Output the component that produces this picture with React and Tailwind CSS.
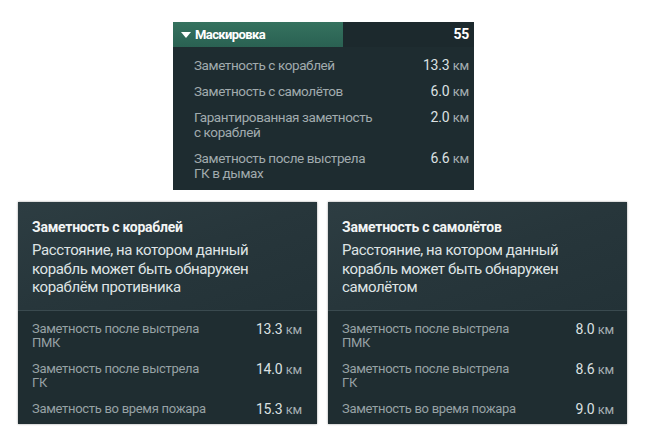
const font = { fontFamily: '"Roboto", "Liberation Sans", sans-serif' };

const topRows = [
  { label: ['Заметность с кораблей'], value: '13.3' },
  { label: ['Заметность с самолётов'], value: '6.0' },
  { label: ['Гарантированная заметность', 'с кораблей'], value: '2.0' },
  { label: ['Заметность после выстрела', 'ГК в дымах'], value: '6.6' },
];

const Value = ({ v }) => (
  <span className="whitespace-nowrap leading-[15px] text-[#dce1e2] text-[14px] tracking-[-0.2px]">
    {v} <span className="text-[13px] text-[#a4aeb1]">км</span>
  </span>
);

const InfoCard = ({ title, desc, rows, pr }) => (
  <div className="w-[299px] h-[222px] flex flex-col bg-[#26353a] shadow-[0_0_2px_rgba(0,0,0,0.4)]">
    <div className="pl-[14px] pt-[16px] pb-[13px] bg-gradient-to-br from-[#2d3d42] via-[#27363b] to-[#233237]">
      <div className="text-[14px] leading-[18px] font-bold tracking-[-0.25px] text-[#f2f4f4]">{title}</div>
      <div className="mt-[5px] text-[15px] leading-[18.5px] tracking-[-0.4px] text-[#dfe4e5]">
        {desc.map((l) => (
          <div key={l}>{l}</div>
        ))}
      </div>
    </div>
    <div className="h-px bg-[#3a4a4f]" />
    <div className={`flex-1 flex flex-col gap-[12px] pt-[11px] pl-[14px] bg-[#1f2d31] ${pr}`}>
      {rows.map((r) => (
        <div key={r.label.join()} className="flex justify-between">
          <div className="text-[13px] leading-[14px] tracking-[-0.3px] text-[#97a2a5]">
            {r.label.map((l) => (
              <div key={l}>{l}</div>
            ))}
          </div>
          <Value v={r.value} />
        </div>
      ))}
    </div>
  </div>
);

export default function App() {
  return (
    <div className="min-h-screen bg-white" style={font}>
      <div className="pt-[22px] pl-[173px]">
        <div className="w-[301px] bg-[#1e2c30]">
          <div className="flex h-[25px] bg-[#1c292d]">
            <div className="w-[170px] flex items-center pl-[8px] bg-gradient-to-b from-[#35725f] to-[#2a6152]">
              <span className="w-0 h-0 border-l-[5px] border-r-[5px] border-t-[6px] border-l-transparent border-r-transparent border-t-white mr-[4px]" />
              <span className="text-[13px] font-bold tracking-[-0.6px] text-white">Маскировка</span>
            </div>
            <div className="flex-1 flex items-center justify-end pr-[5px] text-[14px] font-bold tracking-[-0.3px] text-white">55</div>
          </div>
          <div className="flex flex-col gap-[11px] pt-[11px] pb-[9px] pl-[21px] pr-[5px]">
            {topRows.map((r) => (
              <div key={r.label.join()} className="flex justify-between">
                <div className="text-[13.5px] leading-[15px] tracking-[-0.4px] text-[#a1abae]">
                  {r.label.map((l) => (
                    <div key={l}>{l}</div>
                  ))}
                </div>
                <Value v={r.value} />
              </div>
            ))}
          </div>
        </div>
      </div>
      <div className="flex gap-[11px] pt-[12px] pl-[18px]">
        <InfoCard
          title="Заметность с кораблей"
          desc={['Расстояние, на котором данный', 'корабль может быть обнаружен', 'кораблём противника']}
          rows={[
            { label: ['Заметность после выстрела', 'ПМК'], value: '13.3' },
            { label: ['Заметность после выстрела', 'ГК'], value: '14.0' },
            { label: ['Заметность во время пожара'], value: '15.3' },
          ]}
          pr="pr-[15px]"
        />
        <InfoCard
          title="Заметность с самолётов"
          desc={['Расстояние, на котором данный', 'корабль может быть обнаружен', 'самолётом']}
          rows={[
            { label: ['Заметность после выстрела', 'ПМК'], value: '8.0' },
            { label: ['Заметность после выстрела', 'ГК'], value: '8.6' },
            { label: ['Заметность во время пожара'], value: '9.0' },
          ]}
          pr="pr-[13px]"
        />
      </div>
    </div>
  );
}
